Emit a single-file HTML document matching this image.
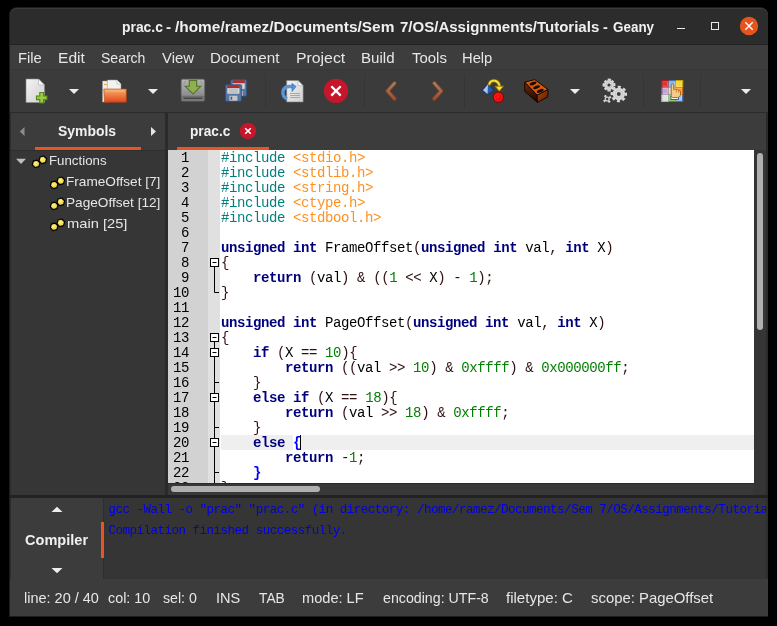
<!DOCTYPE html>
<html><head><meta charset="utf-8">
<style>
*{margin:0;padding:0;box-sizing:border-box}
html,body{width:777px;height:626px;background:#000;overflow:hidden;font-family:"Liberation Sans",sans-serif}
.a{position:absolute}
svg.a{overflow:visible}
.t{position:absolute;white-space:pre;transform-origin:0 0}
.code{position:absolute;left:221px;white-space:pre;font-family:"Liberation Mono",monospace;font-size:14px;letter-spacing:-0.4px;line-height:15px;color:#000}
.k{color:#00007f;font-weight:bold}
.p{color:#007f7f}
.s{color:#ff901e}
.n{color:#007f00}
.o{color:#301010}
.b{color:#0000ff;font-weight:bold}
.ln{position:absolute;left:168px;width:21px;text-align:right;white-space:pre;font-family:"Liberation Mono",monospace;font-size:14px;letter-spacing:-0.4px;line-height:15px;color:#000}
</style></head><body style="will-change:transform">

<div class="a" style="left:9px;top:7px;width:759px;height:610px;background:#1c1c1c;border-radius:8px 8px 0 0"></div>
<div class="a" style="left:10px;top:8px;width:758px;height:608px;background:#3c3c3c;border-radius:7px 7px 0 0"></div>
<div class="a" style="left:10px;top:8px;width:758px;height:36px;background:#2c2c2c;border-radius:7px 7px 0 0;box-shadow:inset 0 1px 0 #3a3a3a"></div>
<div class="a" style="left:10px;top:44px;width:758px;height:1px;background:#222;"></div>
<div class="t" style="left:121.50px;top:18.12px;font-size:15px;line-height:17.25px;color:#f0f0f0;font-weight:bold;font-family:'Liberation Sans',sans-serif;transform:scaleX(0.9258);">prac.c</div>
<div class="t" style="left:165.80px;top:18.12px;font-size:15px;line-height:17.25px;color:#f0f0f0;font-weight:bold;font-family:'Liberation Sans',sans-serif;transform:scaleX(1.0200);">-</div>
<div class="t" style="left:174.80px;top:18.12px;font-size:15px;line-height:17.25px;color:#f0f0f0;font-weight:bold;font-family:'Liberation Sans',sans-serif;transform:scaleX(1.0279);">/home/ramez/Documents/Sem</div>
<div class="t" style="left:399.60px;top:18.12px;font-size:15px;line-height:17.25px;color:#f0f0f0;font-weight:bold;font-family:'Liberation Sans',sans-serif;transform:scaleX(1.0016);">7/OS/Assignments/Tutorials</div>
<div class="t" style="left:603.20px;top:18.12px;font-size:15px;line-height:17.25px;color:#f0f0f0;font-weight:bold;font-family:'Liberation Sans',sans-serif;transform:scaleX(0.9600);">-</div>
<div class="t" style="left:612.75px;top:18.12px;font-size:15px;line-height:17.25px;color:#f0f0f0;font-weight:bold;font-family:'Liberation Sans',sans-serif;transform:scaleX(0.8954);">Geany</div>
<div class="a" style="left:677px;top:27.8px;width:8px;height:1.3px;background:#e8e8e8;"></div>
<div class="a" style="left:711px;top:21.8px;width:8px;height:8.2px;border:1.2px solid #e8e8e8"></div>
<svg class="a" style="left:739px;top:17px" width="20" height="20"><circle cx="10" cy="9" r="9.2" fill="#e4541c"/><path d="M6.3 5.3L13.7 12.7M13.7 5.3L6.3 12.7" stroke="#fff" stroke-width="1.4"/></svg>
<div class="a" style="left:10px;top:45px;width:758px;height:24px;background:#3d3d3d;"></div>
<div class="a" style="left:10px;top:69px;width:758px;height:1px;background:#373737;"></div>
<div class="t" style="left:17.73px;top:49.88px;font-size:14.5px;line-height:16.67px;color:#e6e6e6;font-weight:normal;font-family:'Liberation Sans',sans-serif;transform:scaleX(1.0202);">File</div>
<div class="t" style="left:57.52px;top:49.88px;font-size:14.5px;line-height:16.67px;color:#e6e6e6;font-weight:normal;font-family:'Liberation Sans',sans-serif;transform:scaleX(1.0769);">Edit</div>
<div class="t" style="left:101.40px;top:49.88px;font-size:14.5px;line-height:16.67px;color:#e6e6e6;font-weight:normal;font-family:'Liberation Sans',sans-serif;transform:scaleX(0.9656);">Search</div>
<div class="t" style="left:162.40px;top:49.88px;font-size:14.5px;line-height:16.67px;color:#e6e6e6;font-weight:normal;font-family:'Liberation Sans',sans-serif;transform:scaleX(1.0254);">View</div>
<div class="t" style="left:210.25px;top:49.88px;font-size:14.5px;line-height:16.67px;color:#e6e6e6;font-weight:normal;font-family:'Liberation Sans',sans-serif;transform:scaleX(1.0499);">Document</div>
<div class="t" style="left:295.71px;top:49.88px;font-size:14.5px;line-height:16.67px;color:#e6e6e6;font-weight:normal;font-family:'Liberation Sans',sans-serif;transform:scaleX(1.0907);">Project</div>
<div class="t" style="left:360.56px;top:49.88px;font-size:14.5px;line-height:16.67px;color:#e6e6e6;font-weight:normal;font-family:'Liberation Sans',sans-serif;transform:scaleX(1.0392);">Build</div>
<div class="t" style="left:411.60px;top:49.88px;font-size:14.5px;line-height:16.67px;color:#e6e6e6;font-weight:normal;font-family:'Liberation Sans',sans-serif;transform:scaleX(1.0298);">Tools</div>
<div class="t" style="left:462.48px;top:49.88px;font-size:14.5px;line-height:16.67px;color:#e6e6e6;font-weight:normal;font-family:'Liberation Sans',sans-serif;transform:scaleX(1.0154);">Help</div>
<div class="a" style="left:10px;top:70px;width:758px;height:42px;background:#3b3b3b;"></div>
<div class="a" style="left:10px;top:112px;width:758px;height:1px;background:#2b2b2b;"></div>
<div class="a" style="left:265px;top:74px;width:1px;height:34px;background:#353535;"></div>
<div class="a" style="left:364px;top:74px;width:1px;height:34px;background:#353535;"></div>
<div class="a" style="left:464px;top:74px;width:1px;height:34px;background:#353535;"></div>
<div class="a" style="left:643px;top:74px;width:1px;height:34px;background:#353535;"></div>
<div class="a" style="left:700px;top:74px;width:1px;height:34px;background:#353535;"></div>
<svg class="a" style="left:0;top:0" width="777" height="626"><path d="M69 89H79L74 94Z" fill="#ededed"/><path d="M148 89H158L153 94Z" fill="#ededed"/><path d="M570 89H580L575 94Z" fill="#ededed"/><path d="M741 89H751L746 94Z" fill="#ededed"/><defs>
<linearGradient id="pg" x1="0" y1="0" x2="1" y2="1"><stop offset="0" stop-color="#f4f4f4"/><stop offset="1" stop-color="#cfcfcf"/></linearGradient>
<linearGradient id="fo" x1="0" y1="0" x2="0" y2="1"><stop offset="0" stop-color="#f6b06a"/><stop offset="1" stop-color="#e2461a"/></linearGradient>
<linearGradient id="dr" x1="0" y1="0" x2="0" y2="1"><stop offset="0" stop-color="#b4b4b4"/><stop offset="1" stop-color="#8c8c8c"/></linearGradient>
<linearGradient id="ar" x1="0" y1="0" x2="0" y2="1" gradientUnits="objectBoundingBox"><stop offset="0" stop-color="#c8a080"/><stop offset="1" stop-color="#c85a30"/></linearGradient>
</defs><path d="M26 79H38.5L44.5 85V102.5H26Z" fill="url(#pg)" stroke="#8a8a8a" stroke-width="0.6"/>
<path d="M38.5 79V85H44.5Z" fill="#fafafa" stroke="#9a9a9a" stroke-width="0.5"/>
<path d="M39.8 92.5H43.6V96H47V99.6H43.6V103H39.8V99.6H36.5V96H39.8Z" fill="#9cc940" stroke="#4f8a12" stroke-width="1.1"/><path d="M102.5 81H109V102H102.5Z" fill="#ededed" stroke="#9a9a9a" stroke-width="0.5"/>
<path d="M104 84.5H107" stroke="#f0a040" stroke-width="1"/>
<path d="M107.5 80H117L121 84V92H107.5Z" fill="#f2f2f2" stroke="#9a9a9a" stroke-width="0.5"/>
<path d="M117 80V84H121Z" fill="#fff" stroke="#9a9a9a" stroke-width="0.5"/>
<path d="M103.8 89H126.3V102.2H104.5Z" fill="url(#fo)" stroke="#c0400e" stroke-width="0.6"/>
<path d="M105.5 91H124.5" stroke="#f8c890" stroke-width="1" opacity="0.7"/><path d="M182.5 79.2H203.3Q204.6 79.2 204.6 81V97H181.2V81Q181.2 79.2 182.5 79.2Z" fill="url(#dr)" stroke="#6a6a6a" stroke-width="0.7"/>
<path d="M181.2 96.2H204.6V100.2Q204.6 101.2 203.4 101.2H182.4Q181.2 101.2 181.2 100.2Z" fill="#7c7c7c" stroke="#5a5a5a" stroke-width="0.6"/>
<path d="M183.5 98.2H202.5" stroke="#303030" stroke-width="1.1"/>
<path d="M183 94.5Q193 88 203 94.5" fill="none" stroke="#8a8a8a" stroke-width="0.8"/>
<path d="M183.8 84.5Q184 81.5 186 81M202.2 84.5Q202 81.5 200 81" fill="none" stroke="#8a8a8a" stroke-width="0.7"/>
<path d="M189.3 80.5H196.7V86.3H200.8L193 94L185.2 86.3H189.3Z" fill="#92ae50" stroke="#4e7424" stroke-width="1.1"/><rect x="230.7" y="79.8" width="16" height="16.5" rx="1.2" fill="#5577a6" stroke="#2f4d7a" stroke-width="0.8"/>
<rect x="232.7" y="80.3" width="12" height="3" fill="#b22a2a"/>
<rect x="232.7" y="83.3" width="12" height="5.5" fill="#dcdcdc"/>
<path d="M234.2 85.1H243.2M234.2 87.1H243.2" stroke="#9a9a9a" stroke-width="0.8"/>
<rect x="234.7" y="90.8" width="8" height="5" fill="#c8c8c8"/>
<rect x="235.89999999999998" y="91.8" width="1.6" height="3" fill="#3a5a90"/><rect x="225.4" y="84.7" width="16" height="16.5" rx="1.2" fill="#5577a6" stroke="#2f4d7a" stroke-width="0.8"/>
<rect x="227.4" y="85.2" width="12" height="3" fill="#b22a2a"/>
<rect x="227.4" y="88.2" width="12" height="5.5" fill="#dcdcdc"/>
<path d="M228.9 90.0H237.9M228.9 92.0H237.9" stroke="#9a9a9a" stroke-width="0.8"/>
<rect x="229.4" y="95.7" width="8" height="5" fill="#c8c8c8"/>
<rect x="230.6" y="96.7" width="1.6" height="3" fill="#3a5a90"/><path d="M286.7 80.6H298L303.1 85.7V101.9H286.7Z" fill="url(#pg)" stroke="#8a8a8a" stroke-width="0.6"/>
<path d="M298 80.6V85.7H303.1Z" fill="#fafafa" stroke="#9a9a9a" stroke-width="0.5"/>
<path d="M290 93.5H300M290 95.5H300M290 97.5H300" stroke="#9a9e92" stroke-width="0.8"/>
<path d="M287 99C281 96 281.5 87 289 86.5H293" fill="none" stroke="#5b95d6" stroke-width="3.4"/>
<path d="M292 83.5L296 86.5L292 91.5Z" fill="#5b95d6" stroke="#3a78c0" stroke-width="0.8"/><circle cx="336" cy="90.9" r="12.1" fill="#c7162b"/>
<path d="M331.3 86.2L340.7 95.6M340.7 86.2L331.3 95.6" stroke="#fff" stroke-width="2.3"/><g opacity="0.72"><path d="M394.5 83.2L387.6 91L394.5 98.7" fill="none" stroke="#a2441e" stroke-width="4.2" stroke-linecap="round" stroke-linejoin="round"/>
<path d="M394.5 83.2L387.6 91L394.5 98.7" fill="none" stroke="url(#ar)" stroke-width="2.4" stroke-linecap="round" stroke-linejoin="round"/>
<path d="M434.3 83.2L441.2 91L434.3 98.7" fill="none" stroke="#a2441e" stroke-width="4.2" stroke-linecap="round" stroke-linejoin="round"/>
<path d="M434.3 83.2L441.2 91L434.3 98.7" fill="none" stroke="url(#ar)" stroke-width="2.4" stroke-linecap="round" stroke-linejoin="round"/></g><defs><radialGradient id="rc" cx="0.45" cy="0.45" r="0.6"><stop offset="0" stop-color="#ff1a1a"/><stop offset="0.7" stop-color="#e00000"/><stop offset="1" stop-color="#b00000"/></radialGradient>
<linearGradient id="bl" x1="0" y1="0" x2="0" y2="1"><stop offset="0" stop-color="#7a2e00"/><stop offset="1" stop-color="#120400"/></linearGradient>
<linearGradient id="bf" x1="0" y1="0" x2="1" y2="1"><stop offset="0" stop-color="#a84410"/><stop offset="1" stop-color="#5a1e00"/></linearGradient></defs>
<path d="M488 83.5L493.6 90.5L487.5 94.7L482.3 90.3Z" fill="#2a5aa6" stroke="#13306a" stroke-width="1"/>
<path d="M488 84.2L487.5 94L483 90.2Z" fill="#a8c8f0"/>
<circle cx="498.4" cy="97.3" r="5.2" fill="url(#rc)" stroke="#8a0000" stroke-width="0.9"/>
<circle cx="498.4" cy="97.3" r="3.9" fill="none" stroke="#ff8080" stroke-width="0.5" opacity="0.6"/>
<path d="M489.3 84C490.5 79.5 498.5 79 499.6 86.5" fill="none" stroke="#8a7600" stroke-width="3.4" stroke-linecap="round"/>
<path d="M489.3 84C490.5 79.5 498.5 79 499.6 86.5" fill="none" stroke="#f6de3a" stroke-width="1.8" stroke-linecap="round"/>
<path d="M495 86.2H503.6L499.3 91.2Z" fill="#f6de3a" stroke="#8a7600" stroke-width="0.9" stroke-linejoin="round"/><path d="M524.6 82.2L534.8 79.6L548 89.5L537.2 95.2Z" fill="#d85a10" stroke="#160800" stroke-width="1"/>
<path d="M524.6 82.2L537.2 95.2L537.4 102.4L524.8 91.5Z" fill="url(#bl)" stroke="#160800" stroke-width="1"/>
<path d="M537.2 95.2L548 89.5L547.8 96.8L537.4 102.4Z" fill="url(#bf)" stroke="#160800" stroke-width="1"/>
<ellipse cx="533" cy="83.5" rx="3.6" ry="1.5" transform="rotate(-22 533 83.5)" fill="#1e0a00"/>
<ellipse cx="536.6" cy="87.2" rx="3.6" ry="1.5" transform="rotate(-22 536.6 87.2)" fill="#1e0a00"/>
<ellipse cx="540.2" cy="90.9" rx="3.6" ry="1.5" transform="rotate(-22 540.2 90.9)" fill="#1e0a00"/><circle cx="609" cy="85" r="4.8" fill="#d8d8d8"/><circle cx="609" cy="85" r="5.50" fill="none" stroke="#d8d8d8" stroke-width="2.00" stroke-dasharray="3.2 5.439" transform="rotate(-20 609 85)"/><circle cx="609" cy="85" r="2.98" fill="none" stroke="#bdbdbd" stroke-width="0.6"/><circle cx="609" cy="85" r="1.5" fill="#3b3b3b"/><circle cx="609" cy="85" r="4.8" fill="#d8d8d8"/><circle cx="609" cy="85" r="5.30" fill="none" stroke="#d8d8d8" stroke-width="1.60" stroke-dasharray="2.6 5.725" transform="rotate(25 609 85)"/><circle cx="609" cy="85" r="2.98" fill="none" stroke="#bdbdbd" stroke-width="0.6"/><circle cx="609" cy="85" r="0.1" fill="#3b3b3b"/><circle cx="609" cy="85" r="1.6" fill="#3b3b3b"/><circle cx="618.8" cy="94" r="6.2" fill="#d8d8d8"/><circle cx="618.8" cy="94" r="7.10" fill="none" stroke="#d8d8d8" stroke-width="2.40" stroke-dasharray="3.0 2.576" transform="rotate(-10 618.8 94)"/><circle cx="618.8" cy="94" r="3.84" fill="none" stroke="#bdbdbd" stroke-width="0.6"/><circle cx="618.8" cy="94" r="1.9" fill="#3b3b3b"/><circle cx="607.2" cy="99" r="2.6" fill="#d8d8d8"/><circle cx="607.2" cy="99" r="3.30" fill="none" stroke="#d8d8d8" stroke-width="2.00" stroke-dasharray="2.0 3.184" transform="rotate(35 607.2 99)"/><circle cx="607.2" cy="99" r="1.61" fill="none" stroke="#bdbdbd" stroke-width="0.6"/><circle cx="607.2" cy="99" r="1.2" fill="#3b3b3b"/><rect x="661.5" y="80.2" width="7.2" height="7.2" fill="#e03434"/><rect x="662.7" y="81.4" width="4.8" height="4.8" fill="none" stroke="#ffffff" stroke-width="0.6" opacity="0.35"/><rect x="668.7" y="80.2" width="7.2" height="7.2" fill="#86b6e6"/><rect x="669.9" y="81.4" width="4.8" height="4.8" fill="none" stroke="#ffffff" stroke-width="0.6" opacity="0.35"/><rect x="675.9" y="80.2" width="7.2" height="7.2" fill="#f4d63c"/><rect x="677.1" y="81.4" width="4.8" height="4.8" fill="none" stroke="#ffffff" stroke-width="0.6" opacity="0.35"/><rect x="661.5" y="87.4" width="7.2" height="7.2" fill="#c6a4cc"/><rect x="662.7" y="88.6" width="4.8" height="4.8" fill="none" stroke="#ffffff" stroke-width="0.6" opacity="0.35"/><rect x="668.7" y="87.4" width="7.2" height="7.2" fill="#d4dce6"/><rect x="669.9" y="88.6" width="4.8" height="4.8" fill="none" stroke="#ffffff" stroke-width="0.6" opacity="0.35"/><rect x="675.9" y="87.4" width="7.2" height="7.2" fill="#f6983c"/><rect x="677.1" y="88.6" width="4.8" height="4.8" fill="none" stroke="#ffffff" stroke-width="0.6" opacity="0.35"/><rect x="661.5" y="94.6" width="7.2" height="7.2" fill="#e2e2e2"/><rect x="662.7" y="95.8" width="4.8" height="4.8" fill="none" stroke="#ffffff" stroke-width="0.6" opacity="0.35"/><rect x="668.7" y="94.6" width="7.2" height="7.2" fill="#88d44c"/><rect x="669.9" y="95.8" width="4.8" height="4.8" fill="none" stroke="#ffffff" stroke-width="0.6" opacity="0.35"/><rect x="675.9" y="94.6" width="7.2" height="7.2" fill="#aacaee"/><rect x="677.1" y="95.8" width="4.8" height="4.8" fill="none" stroke="#ffffff" stroke-width="0.6" opacity="0.35"/><path d="M661.5 80.7H668.7" stroke="#a81414" stroke-width="1"/><path d="M661.5 101.3H668.7" stroke="#b4b4b4" stroke-width="1"/><path d="M668.7 80.7H675.9" stroke="#3466b0" stroke-width="1"/><path d="M668.7 101.3H675.9" stroke="#3a9a10" stroke-width="1"/><path d="M675.9 80.7H683.1" stroke="#c8a000" stroke-width="1"/><path d="M675.9 101.3H683.1" stroke="#3466b0" stroke-width="1"/><path d="M662.0 80.2V87.4" stroke="#a81414" stroke-width="1"/><path d="M682.6 80.2V87.4" stroke="#c8a000" stroke-width="1"/><path d="M662.0 87.4V94.6" stroke="#784888" stroke-width="1"/><path d="M682.6 87.4V94.6" stroke="#d06010" stroke-width="1"/><path d="M662.0 94.6V101.8" stroke="#b4b4b4" stroke-width="1"/><path d="M682.6 94.6V101.8" stroke="#3466b0" stroke-width="1"/><rect x="671" y="96.5" width="7.5" height="3" fill="#fff" stroke="#2a56a0" stroke-width="0.9"/><path d="M671.2 95.5V85.2C671.2 83.3 673.8 83.3 673.8 85.2V89.8C674.4 88.8 676 88.8 676.3 90C677 89.2 678.5 89.4 678.7 90.8C679.3 90.3 680.5 90.6 680.5 91.8V94.2C680.5 96.5 679 97.4 677.8 97.6H672.8C671.8 97.4 671.2 96.6 671.2 95.5Z" fill="#f3ca8c" stroke="#b0680c" stroke-width="1"/><path d="M676.3 90V92.6M678.7 90.8V92.8" stroke="#b0680c" stroke-width="0.6"/></svg>
<div class="a" style="left:10px;top:113px;width:155px;height:383px;background:#363636;"></div>
<div class="a" style="left:10px;top:113px;width:1px;height:383px;background:#2c2c2c;"></div>
<div class="a" style="left:11px;top:113px;width:154px;height:37px;background:#3c3c3c;"></div>
<div class="a" style="left:11px;top:150px;width:154px;height:1px;background:#2f2f2f;"></div>
<div class="a" style="left:35px;top:147px;width:106px;height:3px;background:#e95420;"></div>
<div class="t" style="left:58.40px;top:123.03px;font-size:14px;line-height:16.10px;color:#f0f0f0;font-weight:bold;font-family:'Liberation Sans',sans-serif;transform:scaleX(0.9955);">Symbols</div>
<svg class="a" style="left:19px;top:126px" width="7" height="11"><path d="M5.5 1L0.8 5.5L5.5 10Z" fill="#8c8c8c"/></svg>
<svg class="a" style="left:150px;top:126px" width="7" height="11"><path d="M1 1L6 5.5L1 10Z" fill="#e6e6e6"/></svg>
<div class="a" style="left:165px;top:113px;width:3px;height:383px;background:#2a2a2a;"></div>
<div class="a" style="left:168px;top:113px;width:600px;height:37px;background:#3c3c3c;"></div>
<div class="a" style="left:177px;top:147px;width:92px;height:3px;background:#e95420;"></div>
<div class="t" style="left:189.50px;top:123.03px;font-size:14px;line-height:16.10px;color:#f0f0f0;font-weight:bold;font-family:'Liberation Sans',sans-serif;transform:scaleX(0.9768);">prac.c</div>
<svg class="a" style="left:239px;top:122px" width="18" height="18"><circle cx="9" cy="9" r="8.2" fill="#c7162b"/><path d="M6.2 6.2L11.8 11.8M11.8 6.2L6.2 11.8" stroke="#fff" stroke-width="1.6"/></svg>
<div class="a" style="left:168px;top:150px;width:586px;height:333px;background:#ffffff;"></div>
<div class="a" style="left:168px;top:150px;width:40px;height:333px;background:#d2d2d2;"></div>
<div class="a" style="left:208px;top:150px;width:12px;height:333px;background:#e0e0e0;"></div>
<div class="a" style="left:221px;top:435px;width:533px;height:15px;background:#efefef;"></div>
<div class="a" style="left:293px;top:435px;width:8px;height:15px;background:#ffffff;"></div>
<div class="a" style="left:300px;top:435px;width:1px;height:15px;background:#000000;"></div>
<div class="a" style="left:754px;top:150px;width:14px;height:345px;background:#353535;"></div>
<div class="a" style="left:757px;top:153px;width:6px;height:177px;background:#b0b0b0;border-radius:3px"></div>
<div class="a" style="left:766px;top:113px;width:2px;height:383px;background:#2a2a2a;"></div>
<div class="a" style="left:168px;top:483px;width:586px;height:12px;background:#383838;"></div>
<div class="a" style="left:168px;top:483px;width:586px;height:1px;background:#2a2a2a;"></div>
<div class="a" style="left:171px;top:485.5px;width:149px;height:6px;background:#b0b0b0;border-radius:3px"></div>
<div class="a" style="left:168px;top:150px;width:586px;height:333px;overflow:hidden">
<div class="code" style="left:53px;top:1px"><span class="p">#include</span> <span class="s">&lt;stdio.h&gt;</span></div>
<div class="ln" style="left:0px;top:1px">1</div>
<div class="code" style="left:53px;top:16px"><span class="p">#include</span> <span class="s">&lt;stdlib.h&gt;</span></div>
<div class="ln" style="left:0px;top:16px">2</div>
<div class="code" style="left:53px;top:31px"><span class="p">#include</span> <span class="s">&lt;string.h&gt;</span></div>
<div class="ln" style="left:0px;top:31px">3</div>
<div class="code" style="left:53px;top:46px"><span class="p">#include</span> <span class="s">&lt;ctype.h&gt;</span></div>
<div class="ln" style="left:0px;top:46px">4</div>
<div class="code" style="left:53px;top:61px"><span class="p">#include</span> <span class="s">&lt;stdbool.h&gt;</span></div>
<div class="ln" style="left:0px;top:61px">5</div>
<div class="code" style="left:53px;top:76px"></div>
<div class="ln" style="left:0px;top:76px">6</div>
<div class="code" style="left:53px;top:91px"><span class="k">unsigned</span> <span class="k">int</span> FrameOffset<span class="o">(</span><span class="k">unsigned</span> <span class="k">int</span> val<span class="o">,</span> <span class="k">int</span> X<span class="o">)</span></div>
<div class="ln" style="left:0px;top:91px">7</div>
<div class="code" style="left:53px;top:106px"><span class="o">{</span></div>
<div class="ln" style="left:0px;top:106px">8</div>
<div class="code" style="left:53px;top:121px">    <span class="k">return</span> <span class="o">(</span>val<span class="o">)</span> <span class="o">&amp;</span> <span class="o">((</span><span class="n">1</span> <span class="o">&lt;&lt;</span> X<span class="o">)</span> <span class="o">-</span> <span class="n">1</span><span class="o">);</span></div>
<div class="ln" style="left:0px;top:121px">9</div>
<div class="code" style="left:53px;top:136px"><span class="o">}</span></div>
<div class="ln" style="left:0px;top:136px">10</div>
<div class="code" style="left:53px;top:151px"></div>
<div class="ln" style="left:0px;top:151px">11</div>
<div class="code" style="left:53px;top:166px"><span class="k">unsigned</span> <span class="k">int</span> PageOffset<span class="o">(</span><span class="k">unsigned</span> <span class="k">int</span> val<span class="o">,</span> <span class="k">int</span> X<span class="o">)</span></div>
<div class="ln" style="left:0px;top:166px">12</div>
<div class="code" style="left:53px;top:181px"><span class="o">{</span></div>
<div class="ln" style="left:0px;top:181px">13</div>
<div class="code" style="left:53px;top:196px">    <span class="k">if</span> <span class="o">(</span>X <span class="o">==</span> <span class="n">10</span><span class="o">){</span></div>
<div class="ln" style="left:0px;top:196px">14</div>
<div class="code" style="left:53px;top:211px">        <span class="k">return</span> <span class="o">((</span>val <span class="o">&gt;&gt;</span> <span class="n">10</span><span class="o">)</span> <span class="o">&amp;</span> <span class="n">0xffff</span><span class="o">)</span> <span class="o">&amp;</span> <span class="n">0x000000ff</span><span class="o">;</span></div>
<div class="ln" style="left:0px;top:211px">15</div>
<div class="code" style="left:53px;top:226px">    <span class="o">}</span></div>
<div class="ln" style="left:0px;top:226px">16</div>
<div class="code" style="left:53px;top:241px">    <span class="k">else</span> <span class="k">if</span> <span class="o">(</span>X <span class="o">==</span> <span class="n">18</span><span class="o">){</span></div>
<div class="ln" style="left:0px;top:241px">17</div>
<div class="code" style="left:53px;top:256px">        <span class="k">return</span> <span class="o">(</span>val <span class="o">&gt;&gt;</span> <span class="n">18</span><span class="o">)</span> <span class="o">&amp;</span> <span class="n">0xffff</span><span class="o">;</span></div>
<div class="ln" style="left:0px;top:256px">18</div>
<div class="code" style="left:53px;top:271px">    <span class="o">}</span></div>
<div class="ln" style="left:0px;top:271px">19</div>
<div class="code" style="left:53px;top:286px">    <span class="k">else</span> <span class="b">{</span></div>
<div class="ln" style="left:0px;top:286px">20</div>
<div class="code" style="left:53px;top:301px">        <span class="k">return</span> <span class="o">-</span><span class="n">1</span><span class="o">;</span></div>
<div class="ln" style="left:0px;top:301px">21</div>
<div class="code" style="left:53px;top:316px">    <span class="b">}</span></div>
<div class="ln" style="left:0px;top:316px">22</div>
<div class="code" style="left:53px;top:331px"><span class="o">}</span></div>
<div class="ln" style="left:0px;top:331px">23</div>
</div>
<svg class="a" style="left:0;top:0" width="777" height="626"><rect x="210.5" y="258.5" width="8" height="8" fill="#fff" stroke="#000" stroke-width="1"/><path d="M212.5 262.5H216.5" stroke="#000" stroke-width="1"/><path d="M214.5 266.5V292.5" stroke="#000" stroke-width="1"/><path d="M214.5 292.5H219" stroke="#000" stroke-width="1"/><rect x="210.5" y="333.5" width="8" height="8" fill="#fff" stroke="#000" stroke-width="1"/><path d="M212.5 337.5H216.5" stroke="#000" stroke-width="1"/><path d="M214.5 341.5V483.0" stroke="#000" stroke-width="1"/><rect x="210.5" y="348.5" width="8" height="8" fill="#fff" stroke="#000" stroke-width="1"/><path d="M212.5 352.5H216.5" stroke="#000" stroke-width="1"/><path d="M214.5 382.5H219" stroke="#000" stroke-width="1"/><rect x="210.5" y="393.5" width="8" height="8" fill="#fff" stroke="#000" stroke-width="1"/><path d="M212.5 397.5H216.5" stroke="#000" stroke-width="1"/><path d="M214.5 427.5H219" stroke="#000" stroke-width="1"/><rect x="210.5" y="438.5" width="8" height="8" fill="#fff" stroke="#000" stroke-width="1"/><path d="M212.5 442.5H216.5" stroke="#000" stroke-width="1"/><path d="M214.5 472.5H219" stroke="#000" stroke-width="1"/></svg>
<div class="a" style="left:10px;top:495px;width:758px;height:3px;background:#222222;"></div>
<div class="a" style="left:10px;top:498px;width:1px;height:81px;background:#2c2c2c;"></div>
<div class="a" style="left:11px;top:498px;width:92px;height:81px;background:#3c3c3c;"></div>
<div class="a" style="left:103px;top:498px;width:665px;height:81px;background:#353535;"></div>
<div class="a" style="left:103px;top:498px;width:1px;height:81px;background:#2e2e2e;"></div>
<div class="a" style="left:766px;top:498px;width:2px;height:81px;background:#2e2e2e;"></div>
<div class="a" style="left:101px;top:522px;width:2.7px;height:36px;background:#e95420;"></div>
<div class="t" style="left:25.20px;top:531.68px;font-size:14.5px;line-height:16.67px;color:#f0f0f0;font-weight:bold;font-family:'Liberation Sans',sans-serif;transform:scaleX(1.0032);">Compiler</div>
<svg class="a" style="left:51px;top:506px" width="12" height="8"><path d="M0.5 6L6 0.8L11.5 6Z" fill="#eee"/></svg>
<svg class="a" style="left:51px;top:567px" width="12" height="8"><path d="M0.5 1L6 6.2L11.5 1Z" fill="#eee"/></svg>
<div class="a" style="left:104px;top:498px;width:662px;height:81px;overflow:hidden">
<div class="t" style="left:4.4px;top:1.6px;font-family:'Liberation Mono',monospace;font-size:12.5px;letter-spacing:-0.49px;line-height:21.2px;color:#0000e6">gcc -Wall -o "prac" "prac.c" (in directory: /home/ramez/Documents/Sem 7/OS/Assignments/Tutorials)
Compilation finished successfully.</div>
</div>
<div class="a" style="left:10px;top:579px;width:758px;height:37px;background:#3c3c3c;"></div>
<div class="t" style="left:24.10px;top:589.88px;font-size:14.5px;line-height:16.67px;color:#e6e6e6;font-weight:normal;font-family:'Liberation Sans',sans-serif;transform:scaleX(0.9986);">line: 20 / 40</div>
<div class="t" style="left:108.40px;top:589.88px;font-size:14.5px;line-height:16.67px;color:#e6e6e6;font-weight:normal;font-family:'Liberation Sans',sans-serif;transform:scaleX(0.9893);">col: 10</div>
<div class="t" style="left:163.00px;top:589.88px;font-size:14.5px;line-height:16.67px;color:#e6e6e6;font-weight:normal;font-family:'Liberation Sans',sans-serif;transform:scaleX(0.9771);">sel: 0</div>
<div class="t" style="left:215.90px;top:589.88px;font-size:14.5px;line-height:16.67px;color:#e6e6e6;font-weight:normal;font-family:'Liberation Sans',sans-serif;transform:scaleX(1.0044);">INS</div>
<div class="t" style="left:258.50px;top:589.88px;font-size:14.5px;line-height:16.67px;color:#e6e6e6;font-weight:normal;font-family:'Liberation Sans',sans-serif;transform:scaleX(0.9489);">TAB</div>
<div class="t" style="left:302.20px;top:589.88px;font-size:14.5px;line-height:16.67px;color:#e6e6e6;font-weight:normal;font-family:'Liberation Sans',sans-serif;transform:scaleX(1.0066);">mode: LF</div>
<div class="t" style="left:382.60px;top:589.88px;font-size:14.5px;line-height:16.67px;color:#e6e6e6;font-weight:normal;font-family:'Liberation Sans',sans-serif;transform:scaleX(0.9794);">encoding: UTF-8</div>
<div class="t" style="left:506.20px;top:589.88px;font-size:14.5px;line-height:16.67px;color:#e6e6e6;font-weight:normal;font-family:'Liberation Sans',sans-serif;transform:scaleX(1.0375);">filetype: C</div>
<div class="t" style="left:591.00px;top:589.88px;font-size:14.5px;line-height:16.67px;color:#e6e6e6;font-weight:normal;font-family:'Liberation Sans',sans-serif;transform:scaleX(1.0269);">scope: PageOffset</div>
<svg class="a" style="left:15px;top:158px" width="12" height="7"><path d="M1 0.8H11L6 5.9Z" fill="#bdbdbd"/></svg>
<svg class="a" style="left:31.5px;top:154.5px" width="16" height="15"><path d="M5 8.5L10 5.5" stroke="#000" stroke-width="3.2"/><path d="M5.11,5.13L7.87,7.89L6.86,11.66L3.09,12.67L0.33,9.91L1.34,6.14Z" fill="#f2dc4e" stroke="#000" stroke-width="1.2" stroke-linejoin="round"/><path d="M11.81,1.03L14.57,3.79L13.56,7.56L9.79,8.57L7.03,5.81L8.04,2.04Z" fill="#f2dc4e" stroke="#000" stroke-width="1.2" stroke-linejoin="round"/><circle cx="3.6" cy="8.3" r="1.6" fill="#fff49a" opacity="0.7"/><circle cx="10.3" cy="4.2" r="1.6" fill="#fff49a" opacity="0.7"/></svg>
<div class="t" style="left:48.82px;top:152.78px;font-size:13.5px;line-height:15.52px;color:#e6e6e6;font-weight:normal;font-family:'Liberation Sans',sans-serif;transform:scaleX(0.9831);">Functions</div>
<svg class="a" style="left:49.5px;top:175.5px" width="16" height="15"><path d="M5 8.5L10 5.5" stroke="#000" stroke-width="3.2"/><path d="M5.11,5.13L7.87,7.89L6.86,11.66L3.09,12.67L0.33,9.91L1.34,6.14Z" fill="#f2dc4e" stroke="#000" stroke-width="1.2" stroke-linejoin="round"/><path d="M11.81,1.03L14.57,3.79L13.56,7.56L9.79,8.57L7.03,5.81L8.04,2.04Z" fill="#f2dc4e" stroke="#000" stroke-width="1.2" stroke-linejoin="round"/><circle cx="3.6" cy="8.3" r="1.6" fill="#fff49a" opacity="0.7"/><circle cx="10.3" cy="4.2" r="1.6" fill="#fff49a" opacity="0.7"/></svg>
<div class="t" style="left:66.19px;top:173.78px;font-size:13.5px;line-height:15.52px;color:#e6e6e6;font-weight:normal;font-family:'Liberation Sans',sans-serif;transform:scaleX(1.0089);">FrameOffset [7]</div>
<svg class="a" style="left:49.5px;top:196.5px" width="16" height="15"><path d="M5 8.5L10 5.5" stroke="#000" stroke-width="3.2"/><path d="M5.11,5.13L7.87,7.89L6.86,11.66L3.09,12.67L0.33,9.91L1.34,6.14Z" fill="#f2dc4e" stroke="#000" stroke-width="1.2" stroke-linejoin="round"/><path d="M11.81,1.03L14.57,3.79L13.56,7.56L9.79,8.57L7.03,5.81L8.04,2.04Z" fill="#f2dc4e" stroke="#000" stroke-width="1.2" stroke-linejoin="round"/><circle cx="3.6" cy="8.3" r="1.6" fill="#fff49a" opacity="0.7"/><circle cx="10.3" cy="4.2" r="1.6" fill="#fff49a" opacity="0.7"/></svg>
<div class="t" style="left:66.19px;top:194.78px;font-size:13.5px;line-height:15.52px;color:#e6e6e6;font-weight:normal;font-family:'Liberation Sans',sans-serif;transform:scaleX(1.0086);">PageOffset [12]</div>
<svg class="a" style="left:49.5px;top:217.5px" width="16" height="15"><path d="M5 8.5L10 5.5" stroke="#000" stroke-width="3.2"/><path d="M5.11,5.13L7.87,7.89L6.86,11.66L3.09,12.67L0.33,9.91L1.34,6.14Z" fill="#f2dc4e" stroke="#000" stroke-width="1.2" stroke-linejoin="round"/><path d="M11.81,1.03L14.57,3.79L13.56,7.56L9.79,8.57L7.03,5.81L8.04,2.04Z" fill="#f2dc4e" stroke="#000" stroke-width="1.2" stroke-linejoin="round"/><circle cx="3.6" cy="8.3" r="1.6" fill="#fff49a" opacity="0.7"/><circle cx="10.3" cy="4.2" r="1.6" fill="#fff49a" opacity="0.7"/></svg>
<div class="t" style="left:67.20px;top:215.78px;font-size:13.5px;line-height:15.52px;color:#e6e6e6;font-weight:normal;font-family:'Liberation Sans',sans-serif;transform:scaleX(1.0880);">main [25]</div>
</body></html>
